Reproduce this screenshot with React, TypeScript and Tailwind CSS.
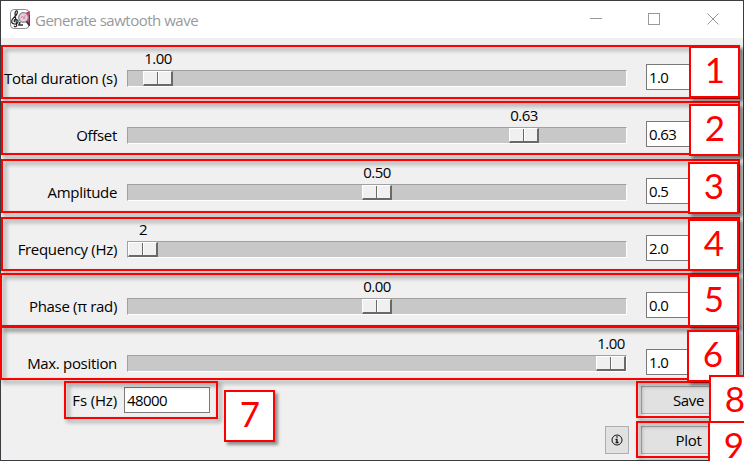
type Control = { label: string; value: string; entry: string; thumb: number };

const controls: Control[] = [
  { label: "Total duration (s)", value: "1.00", entry: "1.0", thumb: 15 },
  { label: "Offset", value: "0.63", entry: "0.63", thumb: 381 },
  { label: "Amplitude", value: "0.50", entry: "0.5", thumb: 234 },
  { label: "Frequency (Hz)", value: "2", entry: "2.0", thumb: 0 },
  { label: "Phase (π rad)", value: "0.00", entry: "0.0", thumb: 234 },
  { label: "Max. position", value: "1.00", entry: "1.0", thumb: 468 },
];

function AppIcon() {
  return (
    <svg className="mt-2" width="21" height="20" viewBox="0 0 21 20">
      <rect x=".5" y=".5" width="18.500" height="19" rx="3.500" fill="#fff" stroke="#8f8f8f" />
      <path d="M16 3.500l4-1.500v14l-4-3z" fill="#cf4460" />
      <path d="M17.500 4v10M19.500 6v11" stroke="#4b3550" strokeWidth=".9" />
      <circle cx="13.500" cy="8.500" r="4.800" fill="#e6cdd8" stroke="#85859b" strokeWidth="1.200" />
      <path d="M11 9l1.500-2 1.500 3 1.500-4" fill="none" stroke="#d08ba0" strokeWidth="1" />
      <path d="M10 13l-1 3h4M16.500 12.500l3 4" fill="none" stroke="#333" strokeWidth="1.600" />
      <path d="M4 17c1.500 1.500 3 .5 2.600-1.500L5 5c-.2-2 1.500-4 2.200-3S7 6 4 8.500s-3.500 6 .5 6.500 4.500-4 2-4.500S3.500 12.500 5 13" fill="none" stroke="#222" strokeWidth="1.200" />
    </svg>
  );
}

function TitleBar() {
  return (
    <div className="flex h-[37px] items-start bg-white pl-[9px] text-[#999]">
      <AppIcon />
      <span className="ml-[4px] mt-[9px] w-[200px] whitespace-nowrap text-[15px] tracking-[-0.49px]">Generate sawtooth wave</span>
      <svg className="ml-auto mr-[23px] mt-3" width="130" height="14" viewBox="0 0 130 14" fill="none" stroke="#999">
        <path d="M0 5.500h12" />
        <rect x="58.500" y=".5" width="11" height="11" />
        <path d="M117.500 .5l11 11M128.500 .5l-11 11" />
      </svg>
    </div>
  );
}

function Entry({ text }: { text: string }) {
  return (
    <div className="flex h-[26px] w-[86px] shrink-0 items-center border border-[#7a7a7a] bg-white pl-[2px] tracking-[-0.6px]">
      {text}
    </div>
  );
}

function SliderRow({ label, value, entry, thumb }: Control) {
  return (
    <div className="flex h-[57px] items-start">
      <div className="mt-[26px] flex h-5 w-[116px] shrink-0 items-center justify-end whitespace-nowrap">{label}</div>
      <div className="ml-[10px] w-[500px] shrink-0">
        <div className="flex h-[28px]">
          <div className="mt-[6px] flex h-5 w-[32px] shrink-0 items-center justify-center tracking-[-0.6px]" style={{ marginLeft: thumb }}>
            {value}
          </div>
        </div>
        <div className="flex h-[17px] border-b border-l border-r border-t border-b-white border-l-[#a0a0a0] border-r-white border-t-[#a0a0a0] bg-[#c8c8c8]">
          <div className="flex h-[15px] w-[30px] shrink-0 border-b-2 border-l border-r-2 border-t border-b-[#696969] border-l-white border-r-[#696969] border-t-white bg-[#f0f0f0]" style={{ marginLeft: thumb }}>
            <div className="w-[14px] border-r border-[#696969]" />
            <div className="w-px bg-white" />
          </div>
        </div>
      </div>
      <div className="ml-[19px] mt-[22px]">
        <Entry text={entry} />
      </div>
    </div>
  );
}

function Button({ text }: { text: string }) {
  return (
    <div className="flex h-[28px] w-[95px] shrink-0 items-center justify-center border border-[#adadad] bg-[#e1e1e1]">{text}</div>
  );
}

const frames = [
  "left-[1px] top-[45px] h-[54px] w-[739px]",
  "left-[1px] top-[101px] h-[54px] w-[739px]",
  "left-[1px] top-[159px] h-[54px] w-[739px]",
  "left-[1px] top-[217px] h-[54px] w-[739px]",
  "left-0 top-[273px] h-[54px] w-[739px]",
  "left-0 top-[326px] h-[54px] w-[739px]",
  "left-[64px] top-[381px] h-[38px] w-[154px]",
  "left-[636px] top-[381px] h-[37px] w-[120px]",
  "left-[636px] top-[421px] h-[37px] w-[120px]",
];

const badges = [
  "left-[689px] top-[46px]",
  "left-[689px] top-[104px]",
  "left-[688px] top-[162px]",
  "left-[688px] top-[219px]",
  "left-[688px] top-[275px]",
  "left-[687px] top-[330px]",
  "left-[224px] top-[390px]",
  "left-[709px] top-[375px]",
  "left-[708px] top-[421px]",
];

export default function App() {
  return (
    <div className="relative h-[461px] w-[744px] overflow-hidden bg-[#3c3c40] pl-px pt-px font-['Open_Sans','Noto_Sans',sans-serif] text-[15px] leading-5 tracking-[-0.32px] text-black">
      <div className="h-[459px] w-[742px] overflow-hidden bg-[#f0f0f0]">
        <TitleBar />
        <div className="pt-[4px]">
          {controls.map((c) => (
            <SliderRow key={c.label} {...c} />
          ))}
        </div>
        <div className="mt-[2px] flex h-[28px] items-center">
          <div className="w-[116px] text-right tracking-[-0.15px]">Fs (Hz)</div>
          <div className="ml-[7px]">
            <Entry text="48000" />
          </div>
          <div className="ml-[431px]">
            <Button text="Save" />
          </div>
        </div>
        <div className="mt-[12px] flex h-[28px] pl-[604px]">
          <div className="flex w-[24px] shrink-0 items-center justify-center border border-[#adadad] bg-[#e1e1e1]">
            <svg width="12" height="12" viewBox="0 0 12 12" fill="none" stroke="#111">
              <circle cx="6" cy="6" r="5" />
              <path d="M6 2.200v1.500M4.500 5.500h1.500v3M4.500 8.500h3" strokeWidth="1.300" />
            </svg>
          </div>
          <div className="ml-[12px]">
            <Button text="Plot" />
          </div>
        </div>
      </div>
      {frames.map((f) => (
        <div key={f} className={`absolute border-2 border-[#ff0000] drop-shadow-[3px_3px_2px_rgba(0,0,0,0.45)] ${f}`} />
      ))}
      {badges.map((b, i) => (
        <div key={b} className={`absolute flex h-[52px] w-[51px] items-center justify-center border-2 border-[#ff0000] bg-white pb-[6px] pl-px font-['Lato',sans-serif] text-[35px] leading-[26px] tracking-normal text-[#ff0000] shadow-[3px_3px_3px_rgba(0,0,0,0.4)] ${b}`}>
          {i + 1}
        </div>
      ))}
    </div>
  );
}
